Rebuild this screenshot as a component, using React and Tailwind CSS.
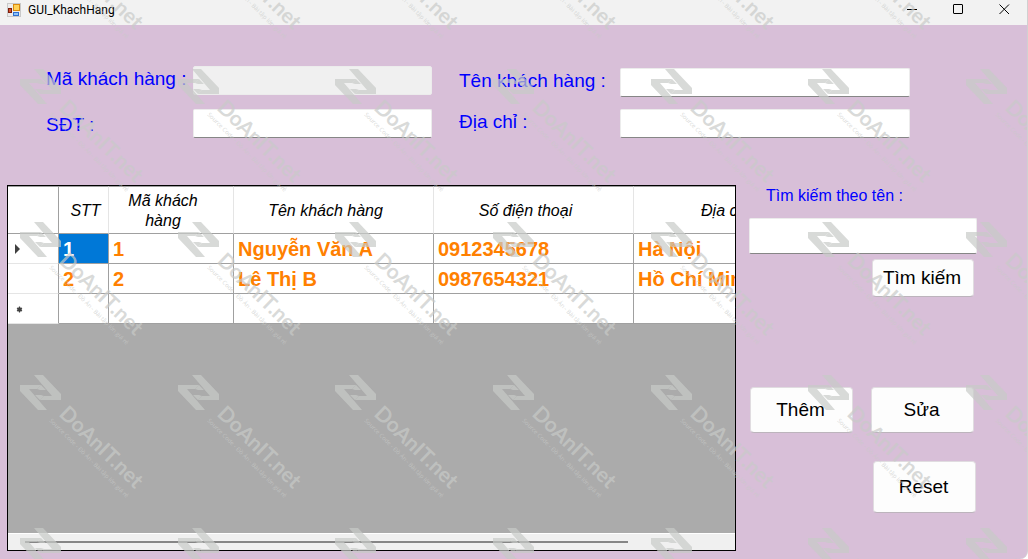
import React from "react";

const COLUMNS = [
  { title: "STT", width: "w-[50px]", pad: "pl-1" },
  { title: "Mã khách hàng", width: "w-[125px]", pad: "pl-2 pr-6" },
  { title: "Tên khách hàng", width: "w-[200px]", pad: "pr-4" },
  { title: "Số điện thoại", width: "w-[200px]", pad: "pr-4" },
  { title: "Địa chỉ", width: "w-[200px]", pad: "pr-4" },
];

const CUSTOMERS = [
  ["1", "1", "Nguyễn Văn A", "0912345678", "Hà Nội"],
  ["2", "2", "Lê Thị B", "0987654321", "Hồ Chí Minh"],
];

const EMPTY_ROW = ["", "", "", "", ""];

function FormIcon() {
  return (
    <svg width="14" height="14" viewBox="0 0 14 14" aria-hidden="true">
      <rect width="14" height="14" fill="#c9c9c9" />
      <rect x="1" y="1" width="12" height="12" fill="#ececec" />
      <rect x="6" y="1" width="7" height="7" fill="#d98a10" />
      <rect x="7" y="2" width="5" height="5" fill="#ffd257" />
      <rect x="1" y="5" width="4" height="5" fill="#7c1d0c" />
      <rect x="2" y="6" width="2" height="3" fill="#d5502c" />
      <rect x="6" y="9" width="6" height="4" fill="#2f6fd0" />
      <rect x="7" y="10" width="4" height="2" fill="#8ec3f7" />
    </svg>
  );
}

function TitleBar() {
  const button = "flex h-full w-[46px] items-center justify-center";
  return (
    <header className="flex h-[25px] items-center bg-[#f2f2f2] pb-1.5 pl-[7px]">
      <FormIcon />
      <h1 className="ml-[7px] flex-1 font-['Roboto',sans-serif] text-[12px] leading-[18px] text-black">
        GUI_KhachHang
      </h1>
      <button type="button" aria-label="Minimize" className={button}>
        <svg width="11" height="11" viewBox="0 0 11 11" stroke="#000">
          <path d="M0 5.5H10" />
        </svg>
      </button>
      <button type="button" aria-label="Maximize" className={button}>
        <svg width="11" height="11" viewBox="0 0 11 11" fill="none" stroke="#000">
          <rect x="0.5" y="0.5" width="9" height="9" rx="0.5" />
        </svg>
      </button>
      <button type="button" aria-label="Close" className={button}>
        <svg width="11" height="11" viewBox="0 0 11 11" stroke="#000">
          <path d="M0.5 0.5L10 10M10 0.5L0.5 10" />
        </svg>
      </button>
    </header>
  );
}

function Field({ id, label, labelWidth, labelPad, disabled }) {
  return (
    <div className="flex h-[29px] items-center">
      <label
        htmlFor={id}
        className={`${labelWidth} ${labelPad} shrink-0 whitespace-nowrap text-[19px] leading-6 text-[#0000ff]`}
      >
        {label}
      </label>
      <input
        id={id}
        type="text"
        disabled={disabled}
        className="h-full min-w-0 flex-1 rounded-xs border border-[#ececec] border-b-[#868686] bg-white px-1 text-[19px] outline-none disabled:border-b-[#ececec] disabled:bg-[#f0f0f0]"
      />
    </div>
  );
}

function RowMarker({ kind }) {
  if (kind === "current") {
    return (
      <svg className="ml-[7px]" width="6" height="10" viewBox="0 0 6 10" aria-hidden="true">
        <path d="M0 0L5 5L0 10Z" fill="#404040" />
      </svg>
    );
  }
  if (kind === "new") {
    return (
      <svg className="ml-[8px] mt-0.5" width="7" height="7" viewBox="0 0 7 7" aria-hidden="true">
        <circle cx="3.5" cy="3.5" r="2.2" fill="#505050" />
        <path d="M3.5 0.5V6.5M1 2L6 5M6 2L1 5" stroke="#404040" strokeWidth="1.2" />
      </svg>
    );
  }
  return null;
}

function GridRow({ cells, marker, selected }) {
  return (
    <tr className="h-[30px]">
      <th className="border-r border-b border-r-[#a0a0a0] border-b-[#e5e5e5] bg-white p-0">
        <RowMarker kind={marker} />
      </th>
      {cells.map((cell, i) => (
        <td
          key={i}
          className={`overflow-hidden whitespace-nowrap border-r border-b border-[#a0a0a0] py-0 pr-0 pl-1 text-[20px] leading-6 font-bold ${
            selected && i === 0 ? "bg-[#0078d7] text-white" : "bg-white text-[#ff8000]"
          }`}
        >
          {cell}
        </td>
      ))}
    </tr>
  );
}

function CustomerGrid() {
  return (
    <section className="flex min-w-0 flex-1 flex-col overflow-hidden border border-black bg-[#ababab]">
      <div className="flex-1 overflow-hidden">
        <table className="w-[826px] table-fixed border-separate border-spacing-0">
          <thead>
            <tr className="h-12">
              <th className="w-[51px] border-t border-r border-b border-[#a0a0a0] bg-white p-0" />
              {COLUMNS.map((col) => (
                <th
                  key={col.title}
                  className={`${col.width} ${col.pad} border-t border-r border-b border-t-[#a0a0a0] border-r-[#e5e5e5] border-b-[#a0a0a0] bg-white pt-0.5 pb-0 text-center text-[16px] leading-5 font-normal text-black italic`}
                >
                  {col.title}
                </th>
              ))}
            </tr>
          </thead>
          <tbody>
            <GridRow cells={CUSTOMERS[0]} marker="current" selected />
            <GridRow cells={CUSTOMERS[1]} />
            <GridRow cells={EMPTY_ROW} marker="new" />
          </tbody>
        </table>
      </div>

      {/* Horizontal scrollbar */}
      <div className="flex h-[17px] items-center border-t border-white bg-[#f0f0f0] pr-[17px] pl-[17px]">
        <div className="h-[2px] w-[87%] bg-[#868686]" />
      </div>
    </section>
  );
}

function ActionButton({ className, children }) {
  return (
    <button
      type="button"
      className={`${className} rounded border border-[#e0dce0] border-b-[#bcb4bc] bg-[#fdfdfd] pr-2 pl-1.5 text-[19px] leading-6 text-black`}
    >
      {children}
    </button>
  );
}

function Sidebar() {
  return (
    <aside className="flex w-[278px] shrink-0 flex-col pr-[50px]">
      <label htmlFor="search" className="pl-[17px] text-[16px] leading-[22px] text-[#0000ff]">
        Tìm kiếm theo tên :
      </label>
      <input
        id="search"
        type="text"
        className="mt-[11px] h-9 w-full rounded-xs border border-[#ececec] border-b-[#868686] bg-white px-1 text-[19px] outline-none"
      />
      <div className="mt-[5px] flex justify-end pr-[3px]">
        <ActionButton className="h-[38px] w-[102px]">Tìm kiếm</ActionButton>
      </div>
      <div className="mt-[90px] flex justify-between pr-[3px] pl-px">
        <ActionButton className="h-[46px] w-[103px]">Thêm</ActionButton>
        <ActionButton className="h-[46px] w-[103px]">Sửa</ActionButton>
      </div>
      <div className="mt-7 flex justify-end pr-px">
        <ActionButton className="h-[52px] w-[103px]">Reset</ActionButton>
      </div>
    </aside>
  );
}

// Repeated brand mark drawn over the whole window
function Watermark() {
  const marks = [];
  for (let row = -1; row < 4; row++) {
    for (let col = -1; col < 7; col++) {
      marks.push({
        x: 20 + Math.round((col * 473) / 3),
        y: 69 + Math.round((row * 459) / 3),
      });
    }
  }
  return (
    <svg
      className="pointer-events-none absolute inset-0 h-full w-full"
      fill="#c8cac8"
      fillOpacity="0.7"
      aria-hidden="true"
    >
      {marks.map((m) => (
        <g key={`${m.x}-${m.y}`} transform={`translate(${m.x} ${m.y})`}>
          <path d="M0 10H21L17 14H9L27 35H18L0 16Z" />
          <path d="M41 25H20L24 21H32L14 0H23L41 19Z" />
          <path d="M21 10L26 15H20L17 14ZM20 25L15 20H21L24 21Z" />
          <g transform="translate(38 40) rotate(44)">
            <text className="font-['Lato',sans-serif] text-[21px] font-bold">DoAnIT.net</text>
          </g>
          <g transform="translate(29 46) rotate(45)">
            <text className="font-['Open_Sans',sans-serif] text-[6px]">
              Source Code - Đồ Án - Bài tập lớn giá rẻ
            </text>
          </g>
        </g>
      ))}
    </svg>
  );
}

export default function App() {
  return (
    <div className="relative flex min-h-screen flex-col overflow-hidden rounded-br-lg border-r border-[#d0d0d0] bg-[#d8bfd8] font-['Liberation_Sans',Arial,sans-serif]">
      <TitleBar />

      {/* Customer details */}
      <form className="flex gap-[27px] pr-[117px] pl-[46px]">
        <div className="flex min-w-0 flex-[386] flex-col gap-3.5 pt-[41px]">
          <Field id="ma" label="Mã khách hàng :" labelWidth="w-[147px]" labelPad="pb-1" disabled />
          <Field id="sdt" label="SĐT :" labelWidth="w-[147px]" labelPad="pt-0.5" />
        </div>
        <div className="flex min-w-0 flex-[451] flex-col gap-3 pt-[43px]">
          <Field id="ten" label="Tên khách hàng :" labelWidth="w-[161px]" labelPad="pb-1" />
          <Field id="diachi" label="Địa chỉ :" labelWidth="w-[161px]" labelPad="pb-1" />
        </div>
      </form>

      <main className="mt-[47px] mb-2 flex flex-1 gap-[13px] pl-[7px]">
        <CustomerGrid />
        <Sidebar />
      </main>

      <Watermark />
    </div>
  );
}
